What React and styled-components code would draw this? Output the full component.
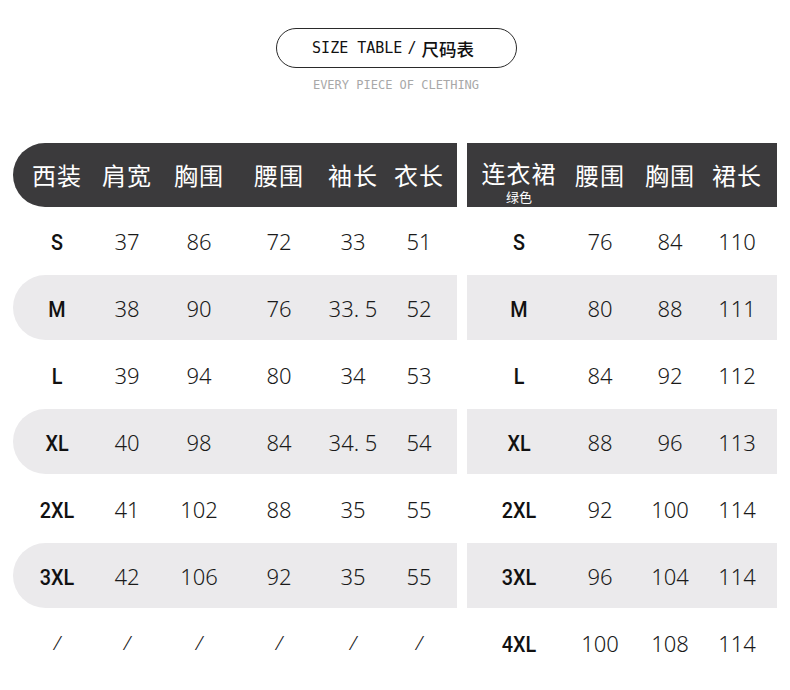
import React from "react";
import styled, { createGlobalStyle } from "styled-components";

const Global = createGlobalStyle`
  html, body { margin: 0; padding: 0; background: #ffffff; }
  body { font-family: "Noto Sans CJK SC", "Noto Sans", sans-serif; color: #1a1a1a; }
`;

const Page = styled.div`
  width: 790px;
  height: 690px;
  background: #fff;
  display: flex;
  flex-direction: column;
  overflow: hidden;
`;

const TitleBlock = styled.div`
  display: flex;
  flex-direction: column;
  align-items: center;
  padding-top: 28px;
  padding-left: 2px;
`;

const Pill = styled.div`
  width: 241px;
  height: 40px;
  border: 1px solid #2a2a2a;
  border-radius: 21px;
  display: flex;
  align-items: center;
  justify-content: center;
  gap: 5px;
  font-family: "DejaVu Sans Mono", "Liberation Mono", monospace;
  font-size: 15px;
  color: #111;
  padding-right: 6px;
  box-sizing: border-box;
`;

const PillCn = styled.span`
  font-family: "Noto Sans CJK SC", sans-serif;
  font-size: 17.5px;
  font-weight: 500;
`;

const Sub = styled.div`
  margin-top: 10px;
  font-family: "DejaVu Sans Mono", "Liberation Mono", monospace;
  font-size: 12px;
  color: #a8a8a8;
`;

const Tables = styled.div`
  display: flex;
  gap: 10px;
  padding-left: 13px;
  margin-top: 51px;
`;

const Table = styled.div`
  display: flex;
  flex-direction: column;
  width: ${(p) => p.$w}px;
`;

const Row = styled.div`
  display: grid;
  grid-template-columns: ${(p) => p.$cols};
  align-items: center;
  box-sizing: border-box;
  padding-left: ${(p) => p.$pl || 0}px;
  height: ${(p) => (p.$shade ? 65 : 67)}px;
  margin: ${(p) => (p.$shade ? "1px 0" : "0")};
  background: ${(p) => (p.$shade ? "#ebeaec" : "transparent")};
  border-radius: ${(p) => (p.$round ? "33px 0 0 33px" : "0")};
`;

const Head = styled(Row)`
  height: 64px;
  margin: 0;
  background: #3b3a3c;
  border-radius: ${(p) => (p.$round ? "32px 0 0 32px" : "0")};
`;

const HeadCell = styled.div`
  text-align: center;
  color: #fff;
  font-family: "Noto Sans CJK SC", sans-serif;
  font-size: 24px;
  letter-spacing: 1px;
  line-height: 1;
`;

const StackCell = styled(HeadCell)`
  display: flex;
  flex-direction: column;
  align-items: center;
  gap: 5px;
  padding-top: 14px;
`;

const Note = styled.span`
  font-size: 13px;
  line-height: 1;
  letter-spacing: 0;
`;

const Cell = styled.div`
  text-align: center;
  font-family: "Noto Sans", "Noto Sans CJK SC", sans-serif;
  font-size: 22px;
  font-weight: 350;
  color: #1a1a1a;
  line-height: 1;
`;

const SizeCell = styled(Cell)`
  font-family: "Roboto", "Noto Sans", sans-serif;
  font-weight: 500;
  font-size: 22.5px;
  color: #111;
  transform: translateY(2px) scaleX(0.88);
`;

const Slash = styled(Cell)`
  font-weight: 300;
  font-style: italic;
  font-size: 20px;
`;

const leftCols = "72px 68px 76px 84px 64px 68px";
const rightCols = "104px 58px 82px 52px";

const suits = [
  ["S", "37", "86", "72", "33", "51"],
  ["M", "38", "90", "76", "33. 5", "52"],
  ["L", "39", "94", "80", "34", "53"],
  ["XL", "40", "98", "84", "34. 5", "54"],
  ["2XL", "41", "102", "88", "35", "55"],
  ["3XL", "42", "106", "92", "35", "55"],
];

const dresses = [
  ["S", "76", "84", "110"],
  ["M", "80", "88", "111"],
  ["L", "84", "92", "112"],
  ["XL", "88", "96", "113"],
  ["2XL", "92", "100", "114"],
  ["3XL", "96", "104", "114"],
  ["4XL", "100", "108", "114"],
];

export default function App() {
  return (
    <Page>
      <Global />
      <TitleBlock>
        <Pill>
          <span>SIZE TABLE</span>
          <span>/</span>
          <PillCn>尺码表</PillCn>
        </Pill>
        <Sub>EVERY PIECE OF CLETHING</Sub>
      </TitleBlock>
      <Tables>
        <Table $w={444}>
          <Head $cols={leftCols} $pl={8} $round>
            {["西装", "肩宽", "胸围", "腰围", "袖长", "衣长"].map((h) => (
              <HeadCell key={h}>{h}</HeadCell>
            ))}
          </Head>
          {suits.map((r, i) => (
            <Row key={r[0]} $cols={leftCols} $pl={8} $shade={i % 2 === 1} $round>
              <SizeCell>{r[0]}</SizeCell>
              {r.slice(1).map((v, j) => (
                <Cell key={j}>{v}</Cell>
              ))}
            </Row>
          ))}
          <Row $cols={leftCols} $pl={8}>
            {[0, 1, 2, 3, 4, 5].map((k) => (
              <Slash key={k}>/</Slash>
            ))}
          </Row>
        </Table>
        <Table $w={310}>
          <Head $cols={rightCols}>
            <StackCell>
              <span>连衣裙</span>
              <Note>绿色</Note>
            </StackCell>
            <HeadCell>腰围</HeadCell>
            <HeadCell>胸围</HeadCell>
            <HeadCell>裙长</HeadCell>
          </Head>
          {dresses.map((r, i) => (
            <Row key={r[0]} $cols={rightCols} $shade={i % 2 === 1}>
              <SizeCell>{r[0]}</SizeCell>
              {r.slice(1).map((v, j) => (
                <Cell key={j}>{v}</Cell>
              ))}
            </Row>
          ))}
        </Table>
      </Tables>
    </Page>
  );
}
